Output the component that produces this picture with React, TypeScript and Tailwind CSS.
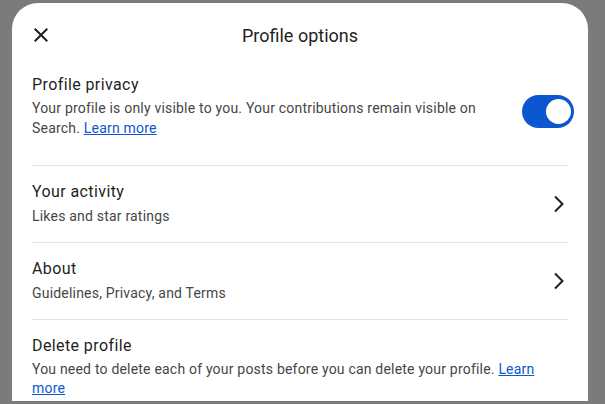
import React from "react";

const font = { fontFamily: "Roboto, 'Noto Sans', sans-serif" };

function Chevron() {
  return (
    <svg width="12" height="18" viewBox="0 0 12 18" className="shrink-0">
      <polyline points="2,1.5 9.5,9 2,16.5" fill="none" stroke="#1f1f1f" strokeWidth="2" />
    </svg>
  );
}

function LinkRow({ title, sub }: { title: string; sub: string }) {
  return (
    <div className="flex items-center justify-between border-t border-[#e3e3e3] pt-[14px] pb-[16px]">
      <div>
        <div className="text-[16px] leading-[24px] tracking-[0.4px] text-[#1f1f1f]">{title}</div>
        <div className="mt-[2px] text-[14px] leading-[20px] tracking-[0.2px] text-[#444746]">{sub}</div>
      </div>
      <div className="mr-[3px] mt-[1px]">
        <Chevron />
      </div>
    </div>
  );
}

export default function App() {
  return (
    <div className="h-[404px] w-[605px] overflow-hidden bg-[#7b7b7b] pt-[3px]" style={font}>
      <div className="ml-[12px] h-[398px] w-[576px] overflow-hidden rounded-t-[26px] bg-white px-[20px]">
        {/* Header */}
        <div className="relative flex h-[64px] items-center justify-center">
          <svg width="24" height="24" viewBox="0 0 24 24" className="absolute left-[-3px] top-[20px]">
            <path
              fill="#1f1f1f"
              d="M19 6.41 17.59 5 12 10.59 6.41 5 5 6.41 10.59 12 5 17.59 6.41 19 12 13.41 17.59 19 19 17.59 13.41 12z"
            />
          </svg>
          <div className="text-[18px] text-[#1f1f1f]">Profile options</div>
        </div>

        {/* Profile privacy */}
        <div className="flex items-start justify-between pt-[6px] pb-[27px]">
          <div className="w-[450px]">
            <div className="text-[16px] leading-[24px] tracking-[0.4px] text-[#1f1f1f]">Profile privacy</div>
            <p className="mt-[1px] text-[14px] leading-[20px] tracking-[0.2px] text-[#444746]">
              Your profile is only visible to you. Your contributions remain visible on Search.{" "}
              <span className="text-[#0b57d0] underline">Learn more</span>
            </p>
          </div>
          <div className="-mr-[6px] mt-[22px] flex h-[33px] w-[52px] items-center justify-end rounded-full bg-[#0b57d0] pr-[3px]">
            <div className="h-[25px] w-[25px] rounded-full bg-white" />
          </div>
        </div>

        <LinkRow title="Your activity" sub="Likes and star ratings" />
        <LinkRow title="About" sub="Guidelines, Privacy, and Terms" />

        {/* Delete profile */}
        <div className="border-t border-[#e3e3e3] pt-[14px]">
          <div className="text-[16px] leading-[24px] tracking-[0.4px] text-[#1f1f1f]">Delete profile</div>
          <p className="mt-[2px] text-[14px] leading-[19px] tracking-[0.2px] text-[#444746]">
            You need to delete each of your posts before you can delete your profile.{" "}
            <span className="text-[#0b57d0] underline">Learn more</span>
          </p>
        </div>
      </div>
    </div>
  );
}
